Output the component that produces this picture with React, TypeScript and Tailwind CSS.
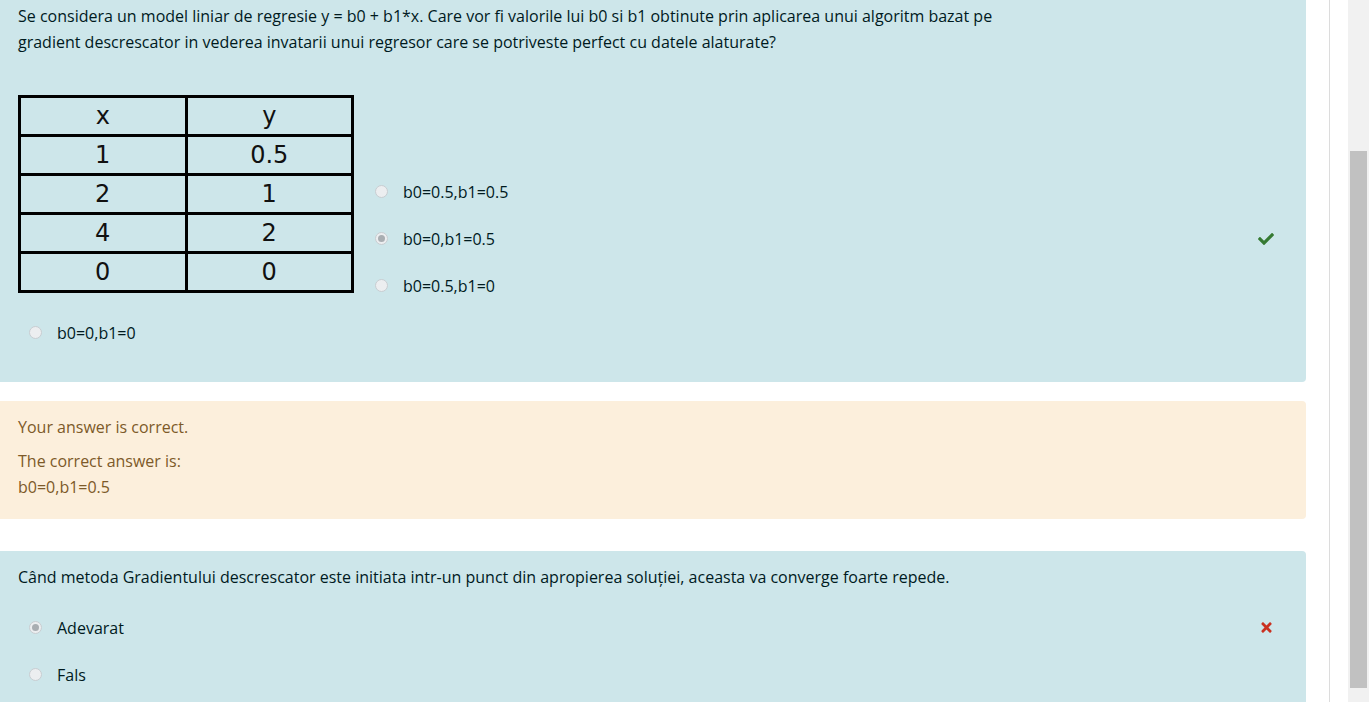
import React from 'react';
import { FaCheck, FaTimes } from 'react-icons/fa';

const font = { fontFamily: '"Open Sans", "Noto Sans", Arial, sans-serif' };

interface Option {
  label: string;
  checked?: boolean;
  mark?: 'ok' | 'bad';
}

const Radio: React.FC<{ checked?: boolean }> = ({ checked }) => (
  <span className="flex h-[13px] w-[13px] shrink-0 items-center justify-center rounded-full border border-[#c8cdd1] bg-[#eceef0]">
    {checked && <span className="h-[7px] w-[7px] rounded-full bg-[#a9aeb2]" />}
  </span>
);

const OptionRow: React.FC<{ opt: Option }> = ({ opt }) => (
  <div className="flex h-[47px] items-center justify-between pr-[32px]">
    <div className="flex items-center gap-[15px]">
      <Radio checked={opt.checked} />
      <span className="text-[16px] text-[#001a1e]">{opt.label}</span>
    </div>
    {opt.mark === 'ok' && <FaCheck className="h-[16px] w-[16px] text-[#357a32]" />}
    {opt.mark === 'bad' && <FaTimes className="h-[15px] w-[15px] text-[#ca3120]" />}
  </div>
);

const tableRows = [
  ['x', 'y'],
  ['1', '0.5'],
  ['2', '1'],
  ['4', '2'],
  ['0', '0'],
];

export default function App() {
  return (
    <div className="flex h-[702px] w-[1369px] overflow-hidden bg-white" style={font}>
      {/* coloana cu intrebari */}
      <div className="flex w-[1306px] shrink-0 flex-col">
        {/* intrebarea 1 */}
        <section className="h-[382px] rounded-br-[4px] bg-[#cde6ea] pl-[18px]">
          <p className="pt-[3px] text-[16px] leading-[26px] text-[#001a1e]">
            Se considera un model liniar de regresie y = b0 + b1*x. Care vor fi valorile lui b0 si b1 obtinute prin aplicarea unui algoritm bazat pe
            <br />
            gradient descrescator in vederea invatarii unui regresor care se potriveste perfect cu datele alaturate?
          </p>

          <div className="mt-[40px] flex items-start">
            <table
              className="h-[195px] w-[336px] shrink-0 table-fixed border-collapse text-center text-[24px] text-[#111]"
              style={{ fontFamily: '"DejaVu Sans", Verdana, sans-serif' }}
            >
              <tbody>
                {tableRows.map((r, i) => (
                  <tr key={i} className="h-[39px]">
                    {r.map((c, j) => (
                      <td key={j} className="border-[3px] border-black p-0 leading-none">
                        {c}
                      </td>
                    ))}
                  </tr>
                ))}
              </tbody>
            </table>

            <div className="flex-1 pl-[21px] pt-[73px]">
              <OptionRow opt={{ label: 'b0=0.5,b1=0.5' }} />
              <OptionRow opt={{ label: 'b0=0,b1=0.5', checked: true, mark: 'ok' }} />
              <OptionRow opt={{ label: 'b0=0.5,b1=0' }} />
            </div>
          </div>

          <div className="pl-[11px]">
            <OptionRow opt={{ label: 'b0=0,b1=0' }} />
          </div>
        </section>

        {/* feedback */}
        <section className="mt-[19px] h-[118px] rounded-r-[4px] bg-[#fcefdc] pl-[18px] pt-[13px] text-[16px] leading-[26px] text-[#7d5a29]">
          <p>Your answer is correct.</p>
          <p className="mt-[8px]">The correct answer is:</p>
          <p>b0=0,b1=0.5</p>
        </section>

        {/* intrebarea 2 */}
        <section className="mt-[32px] flex-1 rounded-tr-[4px] bg-[#cde6ea] pl-[18px]">
          <p className="pt-[13px] text-[16px] leading-[26px] text-[#001a1e]">
            Când metoda Gradientului descrescator este initiata intr-un punct din apropierea soluției, aceasta va converge foarte repede.
          </p>
          <div className="mt-[14px] pl-[11px]">
            <OptionRow opt={{ label: 'Adevarat', checked: true, mark: 'bad' }} />
            <OptionRow opt={{ label: 'Fals' }} />
          </div>
        </section>
      </div>

      <div className="w-[23px] shrink-0" />
      <div className="w-px shrink-0 bg-[#dcdcdc]" />
      <div className="w-[18px] shrink-0" />

      {/* scrollbar */}
      <div className="flex w-[21px] shrink-0 flex-col bg-[#f1f1f1] pb-[14px] pl-[2px] pr-[2px] pt-[151px]">
        <div className="flex-1 bg-[#c1c1c1]" />
      </div>
    </div>
  );
}
